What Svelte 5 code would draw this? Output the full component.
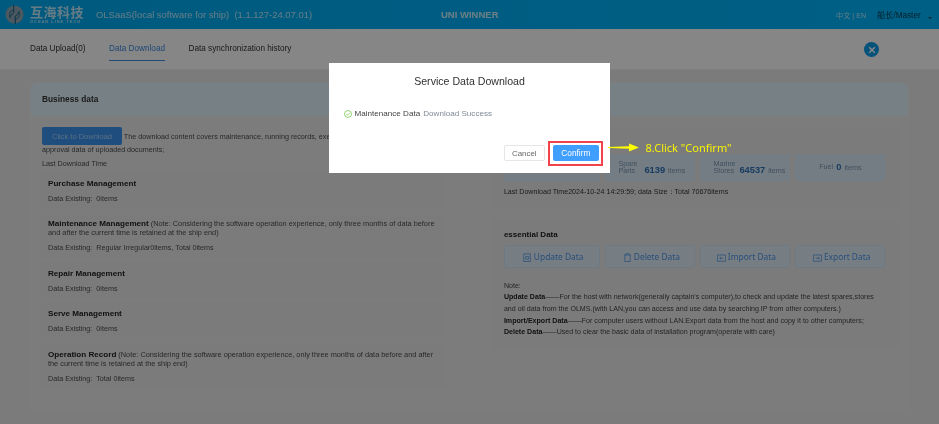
<script>
  const tabs = [
    { label: 'Data Upload(0)' },
    { label: 'Data Download', active: true },
    { label: 'Data synchronization history' }
  ];

  const sections = [
    { title: 'Purchase Management', existing: '0items' },
    {
      title: 'Maintenance Management',
      note: '(Note: Considering the software operation experience, only three months of data before and after the current time is retained at the ship end)',
      existing: 'Regular Irregular0items, Total 0items'
    },
    { title: 'Repair Management', existing: '0items' },
    { title: 'Serve Management', existing: '0items' },
    {
      title: 'Operation Record',
      note: '(Note: Considering the software operation experience, only three months of data before and after the current time is retained at the ship end)',
      existing: ' Total 0items'
    }
  ];

  const stats = [
    { label: 'Ship Data', value: '', unit: '' },
    { label: 'Spare Parts', value: '6139', unit: 'items' },
    { label: 'Marine Stores', value: '64537', unit: 'items' },
    { label: 'Fuel', value: '0', unit: 'items', inline: true }
  ];

  const actions = [
    { label: 'Update Data', icon: 'update' },
    { label: 'Delete Data', icon: 'delete' },
    { label: 'Import Data', icon: 'import' },
    { label: 'Export Data', icon: 'export' }
  ];
</script>

<div class="page">
  <header class="topbar">
    <div class="logo">
      <svg width="19" height="19" viewBox="0 0 20 20" aria-hidden="true">
        <circle cx="10" cy="10" r="9.500" fill="#8fa6b4" />
        <path d="M9.200 0V8L4.500 12.800M10.800 20V12L15.500 7.200" fill="none" stroke="#005b82" stroke-width="1" />
        <path d="M9.200 5A5.200 5.200 0 0 0 6.200 13.600M10.800 15A5.200 5.200 0 0 0 13.800 6.400" fill="none" stroke="#005b82" stroke-width=".7" />
      </svg>
      <div class="logo-text">
        <span class="logo-cn">互海科技</span>
        <span class="logo-en">OCEAN LINK TECH</span>
      </div>
    </div>
    <div class="app-name">OLSaaS(local software for ship)&nbsp; (1.1.127-24.07.01)</div>
    <div class="ship">UNI WINNER</div>
    <div class="lang">中文 | EN</div>
    <div class="user">船长/Master <span class="caret"></span></div>
  </header>

  <nav class="tabs">
    {#each tabs as tab}
      <div class="tab" class:active={tab.active}>{tab.label}</div>
    {/each}
    <div class="close">
      <svg width="8" height="8" viewBox="0 0 8 8" aria-hidden="true">
        <path d="M1.200 1.200l5.600 5.600M6.800 1.200L1.200 6.800" stroke="#fff" stroke-width="1.500" fill="none" />
      </svg>
    </div>
  </nav>

  <main class="content">
    <section class="card">
      <h2 class="card-head">Business data</h2>
      <div class="columns">
        <div class="col left">
          <div class="intro">
            <button class="download">Click to Download</button>
            The download content covers maintenance, running records, execution, purchase, repair, service and<br />approval data of uploaded documents;
          </div>
          <div class="last">Last Download Time</div>
          {#each sections as s}
            <div class="block">
              <div class="block-title"><b>{s.title}</b>{#if s.note}<span class="note">{s.note}</span>{/if}</div>
              <div class="existing">Data Existing:&nbsp; {s.existing}</div>
            </div>
          {/each}
        </div>

        <div class="col right">
          <div class="panel top-panel">
            <div class="stats">
              {#each stats as st}
                <div class="stat" class:center={st.inline}>
                  <span class="stat-label">{st.label}</span>
                  {#if st.value}<b>{st.value}</b><span class="unit">{st.unit}</span>{/if}
                </div>
              {/each}
            </div>
            <div class="summary">Last Download Time2024-10-24 14:29:59; data Size：Total 70676items</div>
          </div>

          <div class="panel essential">
            <h3>essential Data</h3>
            <div class="actions">
              {#each actions as a}
                <button class="action">
                  <svg width="9" height="9" viewBox="0 0 10 10" aria-hidden="true">
                    {#if a.icon === 'delete'}
                      <path d="M1 2.200h8M3.500 2.200V.8h3v1.400M2 2.200v7.300h6V2.200" stroke="currentColor" fill="none" stroke-width=".8" />
                    {:else if a.icon === 'update'}
                      <path d="M.8 1h7.400v8.400H.8zM3 4h3.500v2.800H3z" stroke="currentColor" fill="none" stroke-width=".8" />
                    {:else if a.icon === 'import'}
                      <path d="M.5 2.200h9v7h-9zM7 5.800H3M4.500 4.300L3 5.800l1.500 1.500" stroke="currentColor" fill="none" stroke-width=".8" />
                    {:else}
                      <path d="M.5 2.200h9v7h-9zM3 5.800h4M5.500 4.300L7 5.800 5.500 7.300" stroke="currentColor" fill="none" stroke-width=".8" />
                    {/if}
                  </svg>
                  <span>{a.label}</span>
                </button>
              {/each}
            </div>
            <div class="notes">
              <p>Note:</p>
              <p><b>Update Data</b>——For the host with network(generally captain's computer),to check and update the latest spares,stores and oil data from the OLMS.(with LAN,you can access and use data by searching IP from other computers.)</p>
              <p><b>Import/Export Data</b>——For computer users without LAN.Export data from the host and copy it to other computers;</p>
              <p><b>Delete Data</b>——Used to clear the basic data of installation program(operate with care)</p>
            </div>
          </div>
        </div>
      </div>
    </section>
  </main>

  <div class="overlay"></div>

  <div class="dialog">
    <div class="dialog-title">Service Data Download</div>
    <div class="dialog-msg">
      <svg width="8" height="8" viewBox="0 0 8 8" aria-hidden="true">
        <circle cx="4" cy="4" r="3.500" fill="none" stroke="#67c23a" stroke-width=".7" />
        <path d="M2.300 4.100l1.200 1.200 2.200-2.400" fill="none" stroke="#67c23a" stroke-width=".7" />
      </svg>
      <span>Maintenance Data</span>
      <span class="soft">Download Success</span>
    </div>
    <div class="dialog-foot">
      <button class="cancel">Cancel</button>
      <span class="highlight"><button class="confirm">Confirm</button></span>
    </div>
  </div>

  <div class="callout">
    <svg width="31" height="9" viewBox="0 0 31 9" aria-hidden="true">
      <path d="M0 4L21 3.300V.5L31 4.500 21 8.500V5.700L0 5z" fill="#ffff00" />
    </svg>
    <span>8.Click "Confirm"</span>
  </div>
</div>

<style>
  :global(body) {
    margin: 0;
    background: #e6e6e6;
  }

  button {
    font-family: inherit;
    cursor: pointer;
  }

  .page {
    position: relative;
    width: 939px;
    height: 424px;
    overflow: hidden;
    font-family: "Liberation Sans", Arial, sans-serif;
    font-size: 7.200px;
    color: #4c4c4c;
    background: #e8e8e8;
    filter: blur(0.35px);
  }

  .topbar {
    display: flex;
    align-items: center;
    height: 29px;
    padding: 0 0 0 5px;
    background: linear-gradient(90deg, #00aaf0, #00b4fb);
    color: #fff;
  }

  .logo {
    display: flex;
    align-items: center;
    gap: 6px;
    width: 91px;
    flex: none;
  }

  .logo-text {
    display: flex;
    flex-direction: column;
    line-height: 1;
  }

  .logo-cn {
    font-family: "Noto Sans CJK SC", "Liberation Sans", sans-serif;
    font-size: 13px;
    font-weight: 700;
    letter-spacing: .5px;
    line-height: 14px;
    color: #fff;
    opacity: .75;
  }

  .logo-en {
    font-size: 4px;
    font-weight: 700;
    letter-spacing: .95px;
    line-height: 5px;
    white-space: nowrap;
    opacity: .7;
  }

  .app-name {
    width: 345px;
    flex: none;
    font-size: 9.450px;
    opacity: .75;
  }

  .ship {
    width: 395px;
    flex: none;
    font-size: 9.500px;
    font-weight: 700;
    opacity: .8;
  }

  .lang {
    width: 41px;
    flex: none;
    font-family: "Liberation Sans", "Noto Sans CJK SC", sans-serif;
    font-size: 7.200px;
    opacity: .7;
  }

  .user {
    flex: none;
    font-family: "Liberation Sans", "Noto Sans CJK SC", sans-serif;
    font-size: 8.200px;
    color: #111;
    opacity: .75;
  }

  .caret {
    display: inline-block;
    margin-left: 5px;
    border: 2px solid transparent;
    border-top-color: #222;
    vertical-align: -3px;
  }

  .tabs {
    display: flex;
    align-items: flex-start;
    gap: 23.500px;
    height: 40px;
    padding: 0 30px;
    background: #fdfdfd;
    border-bottom: 1px solid #eee;
    font-size: 8.200px;
    color: #333;
  }

  .tab {
    display: flex;
    align-items: center;
    box-sizing: border-box;
    padding-top: 8px;
    height: 32px;
    border-bottom: 1px solid transparent;
  }

  .tab.active {
    color: #3c8be0;
    border-bottom-color: #3c8be0;
  }

  .close {
    display: flex;
    align-items: center;
    justify-content: center;
    width: 15px;
    height: 15px;
    margin: 13px 30px 0 auto;
    border-radius: 50%;
    background: #0a9be6;
  }

  .content {
    padding: 12px 30px 0;
  }

  .card {
    height: 330px;
    border: 1px solid #eeeeee;
    border-radius: 6px;
    background: #ebebeb;
    box-sizing: border-box;
  }

  .card-head {
    margin: 0;
    height: 33px;
    padding-left: 11px;
    line-height: 33px;
    border-radius: 6px 6px 0 0;
    background: #e1f2fb;
    font-size: 8.300px;
    font-weight: 700;
    color: #333;
  }

  .columns {
    display: grid;
    grid-template-columns: 1fr 1fr;
    gap: 45px;
    padding: 0 10px;
  }

  .intro {
    padding: 11px 0 0 1px;
    line-height: 13.500px;
    white-space: nowrap;
  }

  .download {
    height: 18px;
    width: 80px;
    margin: 0 0 -2px;
    padding: 0;
    border: 0;
    border-radius: 2px;
    background: #3b93ee;
    color: #a8d0f5;
    font-size: 7.500px;
  }

  .last {
    padding: 1px 0 2px 1px;
    line-height: 12px;
  }

  .block {
    padding: 8px 7px 6px;
    background: #e9e9e9;
    margin-bottom: 3.800px;
  }

  .block-title {
    line-height: 8.500px;
    font-size: 7.350px;
  }

  .block-title b {
    font-size: 8.100px;
    color: #222;
  }

  .note {
    margin-left: 2px;
  }

  .existing {
    margin-top: 5.500px;
    line-height: 9px;
  }

  .right {
    padding-top: 11px;
  }

  .panel {
    background: #e9e9e9;
  }

  .top-panel {
    height: 80px;
    padding-top: 26.500px;
    box-sizing: border-box;
    margin-bottom: 11px;
  }

  .stats, .actions {
    display: grid;
    grid-template-columns: 96px 89.500px 89.500px 90px;
    gap: 5.500px;
    padding: 0 13px;
  }

  .stat {
    display: flex;
    align-items: flex-end;
    height: 27.500px;
    padding: 0 0 6px 13px;
    background: #dcecf7;
    color: #7a97b3;
    box-sizing: border-box;
  }

  .stat.center {
    justify-content: center;
    align-items: center;
    padding: 0;
  }

  .stat-label {
    width: 26px;
    flex: none;
    line-height: 7.700px;
  }

  .stat.center .stat-label {
    width: auto;
  }

  .stat b {
    font-size: 9.300px;
    line-height: 9px;
    color: #2f72b8;
    margin-right: 3px;
  }

  .stat.center b {
    margin-left: 3px;
  }

  .summary {
    margin-top: 6px;
    padding-left: 13px;
    color: #333;
    font-size: 7.100px;
  }

  .essential {
    padding: 12px 13px;
    height: 132px;
    box-sizing: border-box;
  }

  .essential h3 {
    margin: 0 0 6px;
    font-size: 8px;
    line-height: 9px;
    color: #222;
  }

  .actions {
    padding: 0;
  }

  .action {
    display: flex;
    align-items: center;
    justify-content: center;
    gap: 1.500px;
    height: 22.500px;
    padding: 0 0 0 3px;
    border: 1px solid #cfe6fa;
    border-radius: 2px;
    background: #dfeef9;
    color: #4d94e6;
    font-family: "Noto Sans", "Liberation Sans", sans-serif;
    font-size: 8.400px;
  }

  .action svg {
    margin-top: 2px;
  }

  .notes {
    margin-top: 13px;
    color: #444;
    font-size: 7.080px;
  }

  .notes p {
    margin: 0;
    line-height: 11.700px;
  }

  .notes b {
    color: #222;
  }

  .overlay {
    position: absolute;
    inset: 0;
    background: rgba(0, 0, 0, 0.47);
  }

  .dialog {
    position: absolute;
    left: 329px;
    top: 63px;
    width: 281px;
    height: 110px;
    background: #fff;
    display: flex;
    flex-direction: column;
    box-sizing: border-box;
  }

  .dialog-title {
    padding-top: 12px;
    text-align: center;
    font-size: 10.600px;
    line-height: 13px;
    color: #303133;
  }

  .dialog-msg {
    display: flex;
    align-items: center;
    gap: 3px;
    margin-top: 21px;
    padding-left: 14.500px;
    font-size: 8.100px;
    color: #444;
  }

  .soft {
    color: #7f8a96;
  }

  .dialog-foot {
    display: flex;
    align-items: center;
    justify-content: flex-end;
    gap: 3.800px;
    margin-top: auto;
    padding: 0 6.700px 7.500px 0;
  }

  .dialog-foot button {
    height: 16px;
    border-radius: 2px;
    padding: 0;
  }

  .cancel {
    width: 40.500px;
    border: 1px solid #e6e6e6;
    background: #fff;
    color: #666;
    font-size: 7.900px;
  }

  .highlight {
    display: flex;
    padding: 2.500px 2.750px;
    border: 2px solid #f0434b;
  }

  .confirm {
    width: 45.500px;
    border: 0;
    background: #409eff;
    color: #fff;
    font-size: 8.300px;
  }

  .callout {
    position: absolute;
    left: 608px;
    top: 140px;
    display: flex;
    align-items: center;
    gap: 6.500px;
    color: #f5f500;
    font-family: "Noto Sans", sans-serif;
    font-size: 11px;
  }
</style>
